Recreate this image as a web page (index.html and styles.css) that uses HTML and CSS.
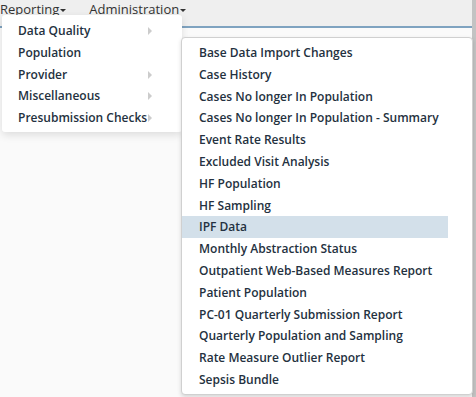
FILE: index.html
```html
<!DOCTYPE html>
<html>
<head>
    <title>Reports</title>
    <link rel="stylesheet" href="styles.css">
</head>
<body>
    <div class="page">
        <div class="main">
            <header class="topbar">
                <ul class="nav">
                    <li class="navItem">
                        <a class="navLink">Reporting<span class="caret"></span></a>
                        <ul class="menu menuMain">
                            <li><a>Data Quality</a><span class="arrow"></span></li>
                            <li><a>Population</a></li>
                            <li><a>Provider</a><span class="arrow"></span></li>
                            <li><a>Miscellaneous</a><span class="arrow"></span></li>
                            <li><a>Presubmission Checks</a><span class="arrow"></span></li>
                        </ul>
                        <ul class="menu menuSub">
                            <li><a>Base Data Import Changes</a></li>
                            <li><a>Case History</a></li>
                            <li><a>Cases No longer In Population</a></li>
                            <li><a>Cases No longer In Population - Summary</a></li>
                            <li><a>Event Rate Results</a></li>
                            <li><a>Excluded Visit Analysis</a></li>
                            <li><a>HF Population</a></li>
                            <li><a>HF Sampling</a></li>
                            <li class="active"><a>IPF Data</a></li>
                            <li><a>Monthly Abstraction Status</a></li>
                            <li><a>Outpatient Web-Based Measures Report</a></li>
                            <li><a>Patient Population</a></li>
                            <li><a>PC-01 Quarterly Submission Report</a></li>
                            <li><a>Quarterly Population and Sampling</a></li>
                            <li><a>Rate Measure Outlier Report</a></li>
                            <li><a>Sepsis Bundle</a></li>
                        </ul>
                    </li>
                    <li class="navItem">
                        <a class="navLink">Administration<span class="caret"></span></a>
                    </li>
                </ul>
            </header>
            <div class="content"></div>
        </div>
        <div class="rail"></div>
    </div>
</body>
</html>
```

FILE: styles.css
```css
html, body {
    margin: 0;
    height: 100%;
}

body {
    font-family: "Open Sans", "Liberation Sans", sans-serif;
    font-size: 13px;
    color: #243140;
    background-color: #fafafa;
}

.page {
    display: flex;
    height: 100%;
}

.main {
    flex: 1;
    display: flex;
    flex-direction: column;
}

.rail {
    width: 4px;
    background-color: #c3c3c3;
}

.topbar {
    background-color: #efefef;
    height: 26px;
    border-bottom: 2px solid #7fa3c0;
}

.nav {
    list-style-type: none;
    margin: 0;
    padding: 0;
    display: flex;
    gap: 23px;
}

.navItem {
    position: relative;
}

.navLink {
    display: inline-block;
    line-height: 15px;
    color: #333;
}

.caret {
    display: inline-block;
    margin-left: 1px;
    vertical-align: middle;
    border-top: 3px solid #333;
    border-left: 3px solid transparent;
    border-right: 3px solid transparent;
}

.menu {
    position: absolute;
    list-style-type: none;
    margin: 0;
    background-color: #fff;
    font-size: 12px;
    font-weight: 600;
}

.menu li {
    position: relative;
    line-height: 21.8px;
}

.menu a {
    display: block;
    white-space: nowrap;
}

.menuMain {
    top: 15px;
    left: 2px;
    width: 180px;
    padding: 5px 0 3px;
    border-radius: 3px;
    box-shadow: 0 3px 8px rgba(0, 0, 0, 0.12);
    z-index: 2;
}

.menuMain a {
    padding-left: 16px;
}

.arrow {
    position: absolute;
    left: 146px;
    top: 7px;
    border-left: 4px solid #cccccc;
    border-top: 4px solid transparent;
    border-bottom: 4px solid transparent;
}

.menuSub {
    top: 37px;
    left: 181px;
    width: 266px;
    padding: 4px 24px 3px 0;
    border: 1px solid #d0d0d0;
    border-radius: 4px;
    box-shadow: 0 2px 4px rgba(0, 0, 0, 0.15);
    z-index: 3;
}

.menuSub a {
    padding-left: 17px;
}

.menuSub .active {
    background-color: #d3e0ea;
}
```
